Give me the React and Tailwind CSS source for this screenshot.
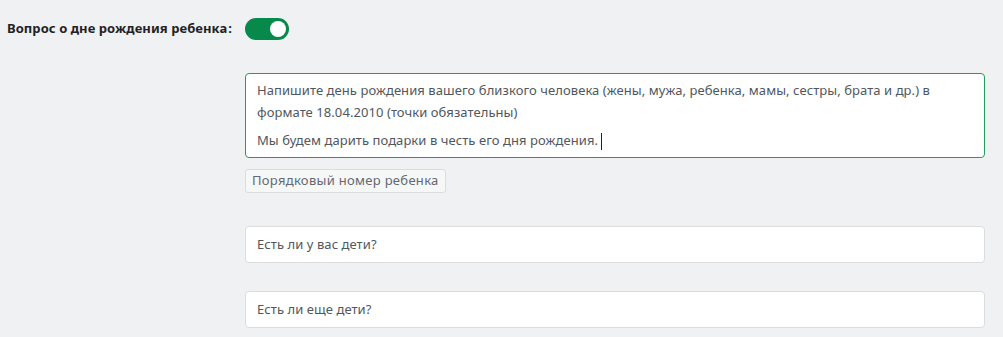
export default function App() {
  return (
    <div className="w-[1003px] h-[337px] bg-[#f0f1f3] overflow-hidden text-[13px] tracking-[0.07px] text-[#3c434a]" style={{ fontFamily: '"Segoe UI", "Noto Sans", sans-serif' }}>
      <div className="flex items-center pt-[18px] pl-[7px] h-[40px]">
        <span className="font-bold text-[#1d2327] w-[238px]">Вопрос о дне рождения ребенка<span className="ml-[1px]">:</span></span>
        <span className="relative inline-block w-[44px] h-[22px] rounded-full bg-[#08894c]">
          <span className="absolute right-[3px] top-[3px] w-[16px] h-[16px] rounded-full bg-white" />
        </span>
      </div>
      <div className="pl-[245px] pr-[18px] pt-[33px] flex flex-col">
        <div className="h-[85px] bg-white border border-[#2a9a5a] rounded-[4px] px-[11px] pt-[5px] text-[#50575e] leading-[22px]">
          <p>Напишите день рождения вашего близкого человека (жены, мужа, ребенка, мамы, сестры, брата и др.) в формате 18.04.2010 (точки обязательны)</p>
          <p className="mt-[6px]">Мы будем дарить подарки в честь его дня рождения.<span className="inline-block w-px h-[17px] bg-[#1d2327] align-middle ml-[3px]" /></p>
        </div>
        <div className="mt-[11px]">
          <span className="inline-flex items-center h-[24px] px-[6px] bg-[#f6f7f7] border border-[#dcdcde] rounded-[3px] text-[#646970] tracking-[0.3px]">Порядковый номер ребенка</span>
        </div>
        <div className="mt-[33px] h-[37px] bg-white border border-[#dcdcde] rounded-[4px] flex items-center px-[11px] text-[#50575e]">Есть ли у вас дети?</div>
        <div className="mt-[28px] h-[37px] bg-white border border-[#dcdcde] rounded-[4px] flex items-center px-[11px] text-[#50575e]">Есть ли еще дети?</div>
      </div>
    </div>
  );
}
